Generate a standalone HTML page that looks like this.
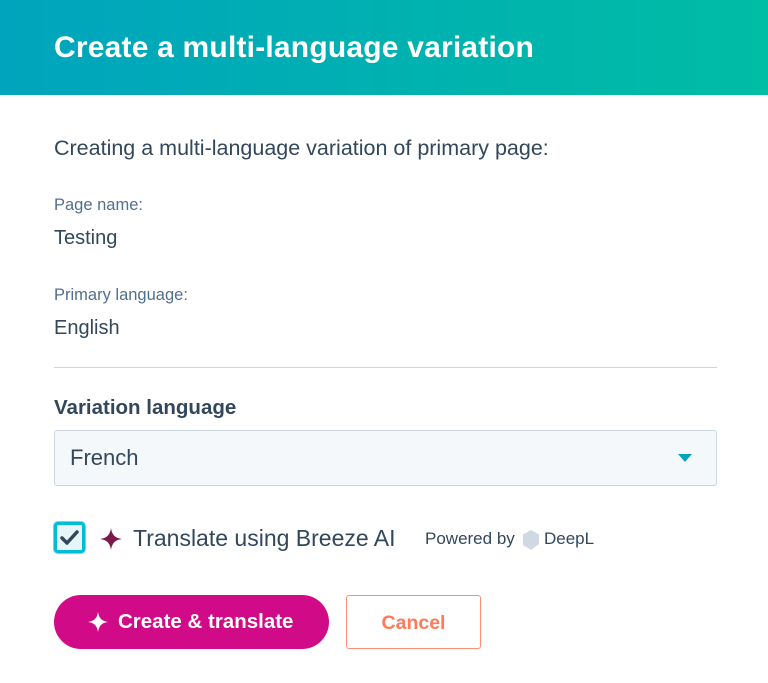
<!DOCTYPE html>
<html><head><style>
*{margin:0;padding:0;box-sizing:border-box}
body{width:768px;height:683px;background:#fff;font-family:"Liberation Sans",sans-serif;color:#33475b;position:relative;overflow:hidden}
.hdr{position:absolute;left:0;top:0;width:768px;height:95px;background:linear-gradient(90deg,#00a4bd,#00bda5)}
.hdr h1{position:absolute;left:54px;top:31px;font-size:30px;color:#fff;font-weight:bold;letter-spacing:0.2px}
.t{position:absolute;left:54px;white-space:nowrap}
.lbl{font-size:16.5px;color:#516f90}
.val{font-size:20px}
.hr{position:absolute;left:54px;top:367px;width:663px;height:1px;background:#cbd6e2}
.dd{position:absolute;left:54px;top:430px;width:663px;height:56px;background:#f5f8fa;border:1px solid #cbd6e2;border-radius:3px}
.dd span{position:absolute;left:15px;top:14px;font-size:22px}
.dd i{position:absolute;right:24px;top:23px;border-left:7px solid transparent;border-right:7px solid transparent;border-top:8px solid #00a4bd}
.cb{position:absolute;left:54px;top:522px;width:31px;height:31px;border:3px solid #00bcd6;border-radius:4px;background:#e5f5f8;box-shadow:0 0 0 1px #7fd1de}
.btn1{position:absolute;left:54px;top:595px;width:275px;height:54px;border-radius:27px;background:#d10a87;color:#fff;font-weight:bold;font-size:20.5px}
.btn2{position:absolute;left:346px;top:595px;width:135px;height:54px;border-radius:3px;border:1px solid #ff8f73;color:#ff7a59;font-weight:bold;font-size:19.5px;text-align:center;line-height:54px}
</style></head><body>
<div class="hdr"><h1>Create a multi-language variation</h1></div>
<div class="t" style="top:136px;font-size:21.5px">Creating a multi-language variation of primary page:</div>
<div class="t lbl" style="top:196px">Page name:</div>
<div class="t val" style="top:227px">Testing</div>
<div class="t lbl" style="top:286px">Primary language:</div>
<div class="t val" style="top:317px">English</div>
<div class="hr"></div>
<div class="t" style="top:396px;font-size:20.5px;font-weight:bold">Variation language</div>
<div class="dd"><span>French</span><i></i></div>
<div class="cb"><svg width="25" height="25" viewBox="0 0 25 25" style="position:absolute;left:0;top:0"><path d="M5 13l5 5 10-11" stroke="#33475b" stroke-width="3.5" fill="none" stroke-linecap="round" stroke-linejoin="round"/></svg></div>
<svg style="position:absolute;left:99px;top:527px" width="24" height="24" viewBox="0 0 24 24"><path d="M12 1C13 8 16 11 23 12C16 13 13 16 12 23C11 16 8 13 1 12C8 11 11 8 12 1Z" fill="#7b1a4b"/></svg>
<div class="t" style="left:133px;top:525px;font-size:23px">Translate using Breeze AI</div>
<div class="t" style="left:425px;top:529px;font-size:17px">Powered by</div>
<svg style="position:absolute;left:521px;top:529px" width="20" height="22" viewBox="0 0 20 22"><path d="M10 1L18 5.5V15L10 21L2 16V5.5Z" fill="#d0d9e3"/></svg>
<div class="t" style="left:544px;top:529px;font-size:17px">DeepL</div>
<div class="btn1"><svg style="position:absolute;left:33px;top:16px" width="22" height="22" viewBox="0 0 24 24"><path d="M12 1C13 8 16 11 23 12C16 13 13 16 12 23C11 16 8 13 1 12C8 11 11 8 12 1Z" fill="#fff"/></svg><span style="position:absolute;left:64px;top:15px">Create &amp; translate</span></div>
<div class="btn2">Cancel</div>
</body></html>
